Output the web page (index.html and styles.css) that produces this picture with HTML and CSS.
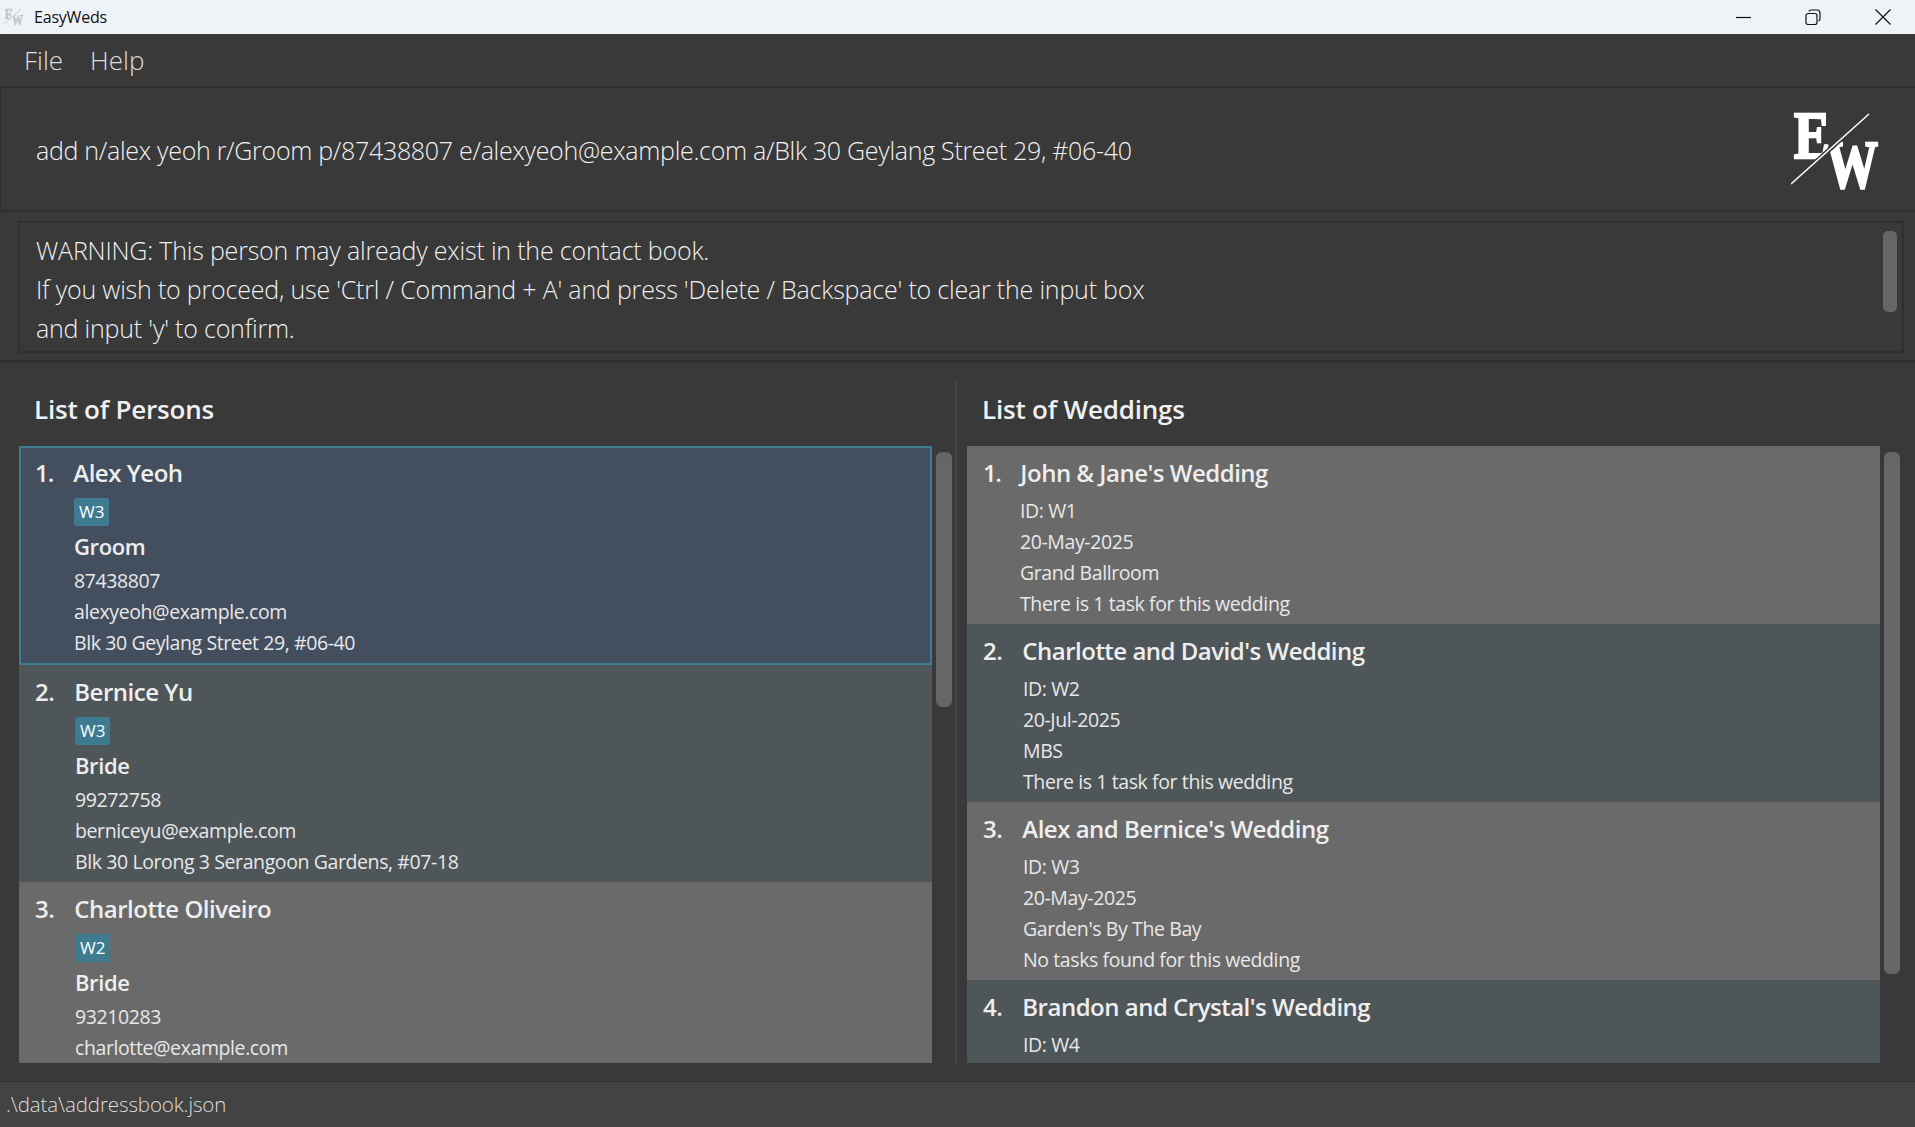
FILE: index.html
```html
<!DOCTYPE html>
<html lang="en">
  <head>
    <meta charset="UTF-8" />
    <title>EasyWeds</title>
    <link rel="stylesheet" href="styles.css">
  </head>
  <body>
    <div class="titlebar">
      <svg class="app-icon" viewBox="0 -20 110 115">
        <defs>
          <clipPath id="clip-e"><polygon points="0,-20 98,-20 0,68"></polygon></clipPath>
          <clipPath id="clip-w"><polygon points="105,-20 110,-20 110,95 -23,95"></polygon></clipPath>
        </defs>
        <text x="3" y="45" textLength="36" lengthAdjust="spacingAndGlyphs" class="logo-letter" clip-path="url(#clip-e)">E</text>
        <text x="35" y="74" textLength="52" lengthAdjust="spacingAndGlyphs" class="logo-letter" clip-path="url(#clip-w)">W</text>
        <line x1="0" y1="71" x2="78" y2="1" class="logo-line"></line>
      </svg>
      <span class="app-name">EasyWeds</span>
      <div class="win-buttons">
        <svg viewBox="0 0 16 16"><path d="M0 8.5H15" /></svg>
        <svg viewBox="0 0 16 16"><path d="M1 6.5a2 2 0 0 1 2-2h7a2 2 0 0 1 2 2v7a2 2 0 0 1-2 2H3a2 2 0 0 1-2-2zM4 2.5a2 2 0 0 1 2-1.500h6a3 3 0 0 1 3 3v6a2 2 0 0 1-1.500 2" /></svg>
        <svg viewBox="0 0 16 16"><path d="M.5 .5L15.500 15.500M15.500 .5L.5 15.500" /></svg>
      </div>
    </div>

    <div class="menubar">
      <span>File</span>
      <span>Help</span>
    </div>

    <div class="command-box">
      <span class="command-text">add n/alex yeoh r/Groom p/87438807 e/alexyeoh@example.com a/Blk 30 Geylang Street 29, #06-40</span>
      <svg class="logo" viewBox="0 -20 110 115">
        <text x="3" y="45" textLength="36" lengthAdjust="spacingAndGlyphs" class="logo-letter" clip-path="url(#clip-e)">E</text>
        <text x="35" y="74" textLength="52" lengthAdjust="spacingAndGlyphs" class="logo-letter" clip-path="url(#clip-w)">W</text>
        <line x1="0" y1="71" x2="78" y2="1" class="logo-line"></line>
      </svg>
    </div>

    <div class="result-wrap">
      <div class="result-box">
        <p>WARNING: This person may already exist in the contact book.</p>
        <p>If you wish to proceed, use 'Ctrl / Command + A' and press 'Delete / Backspace' to clear the input box</p>
        <p>and input 'y' to confirm.</p>
        <div class="result-thumb"></div>
      </div>
    </div>

    <div class="main">
      <section class="panel panel-left">
        <h2>List of Persons</h2>
        <div class="list-row">
          <div class="list">
            <div class="card selected">
              <div class="card-head"><span class="num">1.</span><span class="name">Alex Yeoh</span></div>
              <div class="card-body">
                <span class="tag">W3</span>
                <div class="role">Groom</div>
                <div class="line">87438807</div>
                <div class="line">alexyeoh@example.com</div>
                <div class="line">Blk 30 Geylang Street 29, #06-40</div>
              </div>
            </div>
            <div class="card even">
              <div class="card-head"><span class="num">2.</span><span class="name">Bernice Yu</span></div>
              <div class="card-body">
                <span class="tag">W3</span>
                <div class="role">Bride</div>
                <div class="line">99272758</div>
                <div class="line">berniceyu@example.com</div>
                <div class="line">Blk 30 Lorong 3 Serangoon Gardens, #07-18</div>
              </div>
            </div>
            <div class="card odd">
              <div class="card-head"><span class="num">3.</span><span class="name">Charlotte Oliveiro</span></div>
              <div class="card-body">
                <span class="tag">W2</span>
                <div class="role">Bride</div>
                <div class="line">93210283</div>
                <div class="line">charlotte@example.com</div>
              </div>
            </div>
          </div>
          <div class="scroll"><div class="thumb thumb-persons"></div></div>
        </div>
      </section>

      <section class="panel panel-right">
        <h2>List of Weddings</h2>
        <div class="list-row">
          <div class="list">
            <div class="card odd wedding narrow-num">
              <div class="card-head"><span class="num">1.</span><span class="name">John &amp; Jane's Wedding</span></div>
              <div class="card-body">
                <div class="line">ID: W1</div>
                <div class="line">20-May-2025</div>
                <div class="line">Grand Ballroom</div>
                <div class="line">There is 1 task for this wedding</div>
              </div>
            </div>
            <div class="card even wedding">
              <div class="card-head"><span class="num">2.</span><span class="name">Charlotte and David's Wedding</span></div>
              <div class="card-body">
                <div class="line">ID: W2</div>
                <div class="line">20-Jul-2025</div>
                <div class="line">MBS</div>
                <div class="line">There is 1 task for this wedding</div>
              </div>
            </div>
            <div class="card odd wedding">
              <div class="card-head"><span class="num">3.</span><span class="name">Alex and Bernice's Wedding</span></div>
              <div class="card-body">
                <div class="line">ID: W3</div>
                <div class="line">20-May-2025</div>
                <div class="line">Garden's By The Bay</div>
                <div class="line">No tasks found for this wedding</div>
              </div>
            </div>
            <div class="card even wedding">
              <div class="card-head"><span class="num">4.</span><span class="name">Brandon and Crystal's Wedding</span></div>
              <div class="card-body">
                <div class="line">ID: W4</div>
              </div>
            </div>
          </div>
          <div class="scroll"><div class="thumb thumb-weddings"></div></div>
        </div>
      </section>
    </div>

    <div class="statusbar">.\data\addressbook.json</div>
  </body>
</html>
```

FILE: styles.css
```css
html, body {
  margin: 0;
  height: 1127px;
  overflow: hidden;
}

body {
  display: flex;
  flex-direction: column;
  background: #393939;
  color: #eee;
  font-family: "Open Sans", "Liberation Sans", sans-serif;
}

p {
  margin: 0;
}

/* window chrome */
.titlebar {
  display: flex;
  align-items: center;
  height: 34px;
  padding-left: 4px;
  background: #eff3f7;
  color: #111;
}

.app-icon {
  width: 24px;
  height: 26px;
  opacity: 0.5;
}

.app-icon .logo-letter {
  fill: #999;
  stroke: #999;
}

.app-icon .logo-line {
  stroke: #888;
  stroke-width: 3;
}

.app-name {
  margin-left: 6px;
  font-size: 16px;
  letter-spacing: -0.2px;
}

.win-buttons {
  display: flex;
  gap: 54px;
  margin-left: auto;
  padding-right: 24px;
}

.win-buttons svg {
  width: 16px;
  height: 16px;
  fill: none;
  stroke: #111;
  stroke-width: 1.2;
}

.win-buttons svg:nth-child(2) {
  margin-left: -1px;
}

.menubar {
  display: flex;
  gap: 27px;
  height: 54px;
  align-items: center;
  padding-left: 24px;
  box-sizing: border-box;
  border-bottom: 2px solid #2f2f2f;
  font-size: 26px;
  font-weight: 300;
  color: #ddd;
}

/* command + result */
.command-box {
  display: flex;
  align-items: center;
  justify-content: space-between;
  height: 124px;
  box-sizing: border-box;
  padding: 0 14px 0 35px;
  border-bottom: 2px solid #2f2f2f;
  border-left: 1px solid #303030;
}

.command-text {
  margin-top: 2px;
  font-size: 25px;
  font-weight: 300;
  letter-spacing: -0.3px;
  color: #f2f2f2;
}

.logo {
  width: 110px;
  height: 115px;
  margin-top: 3px;
}

.logo-letter {
  font-family: "Liberation Serif", serif;
  font-weight: 700;
  font-size: 68px;
  fill: #fff;
  stroke: #fff;
  stroke-width: 2.5;
}

.logo-line {
  stroke: #fff;
  stroke-width: 1.5;
}

.result-wrap {
  height: 151px;
  box-sizing: border-box;
  padding: 9px 11px 7px 18px;
  border-bottom: 3px solid #2f2f2f;
}

.result-box {
  position: relative;
  height: 132px;
  box-sizing: border-box;
  padding: 8px 16px;
  border: 2px solid #2f2f2f;
  font-size: 25px;
  font-weight: 300;
  letter-spacing: -0.2px;
  line-height: 39px;
  color: #f0f0f0;
}

.result-thumb {
  position: absolute;
  top: 8px;
  right: 5px;
  width: 14px;
  height: 81px;
  border-radius: 5px;
  background: #666;
}

/* lists */
.main {
  display: flex;
  flex: 1;
  min-height: 0;
  padding: 18px 0 18px 19px;
}

.panel {
  display: flex;
  flex-direction: column;
  min-width: 0;
}

.panel-left {
  width: 938px;
  box-sizing: border-box;
  border-right: 2px solid #454545;
}

.panel-right {
  flex: 1;
  padding-left: 10px;
}

.panel h2 {
  margin: 0;
  height: 65px;
  padding: 9px 0 0 15px;
  box-sizing: border-box;
  font-size: 26px;
  font-weight: 600;
  letter-spacing: -0.2px;
  line-height: 38px;
  color: #f0f0f0;
}

.list-row {
  display: flex;
  flex: 1;
  min-height: 0;
}

.list {
  width: 913px;
  overflow: hidden;
}

.card {
  box-sizing: border-box;
  height: 217px;
  padding: 8px 0 0 16px;
  color: #eee;
}

.card.wedding {
  height: 178px;
}

.selected {
  height: 219px;
  background: #434e5f;
  border: 2px solid #3e7b91;
  padding: 6px 0 0 14px;
}

.even {
  background: #4f5659;
}

.odd {
  background: #6a6a6a;
}

.card-head {
  display: flex;
  height: 36px;
  gap: 20px;
  align-items: center;
  font-size: 24px;
  font-weight: 600;
  letter-spacing: -0.5px;
}

.selected .num {
  letter-spacing: -1px;
}

.narrow-num .num {
  letter-spacing: -1.5px;
}

.card-body {
  padding-left: 40px;
}

.selected .card-body {
  padding-left: 39px;
}

.narrow-num .card-body {
  padding-left: 37px;
}

.tag {
  display: inline-block;
  margin-top: 8px;
  padding: 0 5px;
  height: 28px;
  border-radius: 3px;
  background: #3e7b91;
  font-size: 17px;
  line-height: 28px;
  color: #fff;
}

.role {
  margin-top: 2px;
  height: 36px;
  line-height: 36px;
  font-size: 22px;
  font-weight: 600;
  letter-spacing: -0.4px;
}

.line {
  height: 31px;
  line-height: 31px;
  font-size: 19.5px;
  font-weight: 400;
  letter-spacing: -0.4px;
  color: #e8e8e8;
}

.role + .line {
  margin-top: 1px;
}

.wedding .card-body .line:first-child {
  margin-top: 5px;
}

.scroll {
  width: 22px;
  padding: 6px 0 0 4px;
  box-sizing: border-box;
}

.thumb {
  width: 16px;
  border-radius: 6px;
  background: #666;
}

.thumb-persons {
  height: 255px;
}

.thumb-weddings {
  height: 522px;
}

.statusbar {
  height: 46px;
  box-sizing: border-box;
  padding-left: 6px;
  border-top: 1px solid #303030;
  background: #434343;
  font-size: 20.5px;
  font-weight: 300;
  letter-spacing: -0.1px;
  line-height: 44px;
  color: #ddd;
}
```
